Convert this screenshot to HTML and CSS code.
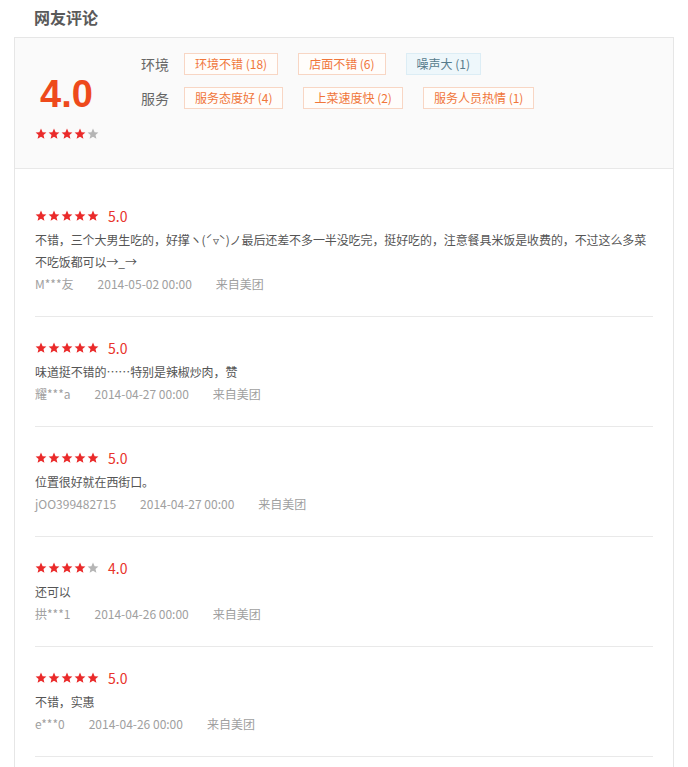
FILE: index.html
```html
<!DOCTYPE html>
<html lang="zh-CN">
<head>
<meta charset="utf-8">
<title>网友评论</title>
<link rel="stylesheet" href="styles.css">
</head>
<body>
<svg class="defs" width="0" height="0" aria-hidden="true">
  <defs>
    <symbol id="star" viewBox="0 0 24 24">
      <path d="M12 1.2l3.2 7.1 7.6.7-5.8 5.1 1.8 7.6L12 17.7l-6.8 4 1.8-7.6L1.2 9l7.6-.7z"/>
    </symbol>
  </defs>
</svg>
<div class="page">
  <h2 class="title">网友评论</h2>
  <div class="box">
    <div class="summary">
      <div class="score">
        <div class="score-num">4.0</div>
        <div class="stars">
          <svg class="star on"><use href="#star"/></svg><svg class="star on"><use href="#star"/></svg><svg class="star on"><use href="#star"/></svg><svg class="star on"><use href="#star"/></svg><svg class="star off"><use href="#star"/></svg>
        </div>
      </div>
      <div class="tags">
        <div class="tag-row">
          <span class="tag-label">环境</span>
          <span class="tag">环境不错 (18)</span>
          <span class="tag">店面不错 (6)</span>
          <span class="tag neg">噪声大 (1)</span>
        </div>
        <div class="tag-row">
          <span class="tag-label">服务</span>
          <span class="tag">服务态度好 (4)</span>
          <span class="tag">上菜速度快 (2)</span>
          <span class="tag">服务人员热情 (1)</span>
        </div>
      </div>
    </div>
    <ul class="list">
      <li class="item">
        <div class="rate">
          <span class="stars"><svg class="star on"><use href="#star"/></svg><svg class="star on"><use href="#star"/></svg><svg class="star on"><use href="#star"/></svg><svg class="star on"><use href="#star"/></svg><svg class="star on"><use href="#star"/></svg></span>
          <span class="rate-num">5.0</span>
        </div>
        <p class="text">不错，三个大男生吃的，好撑ヽ(ˊ▿ˋ)ノ最后还差不多一半没吃完，挺好吃的，注意餐具米饭是收费的，不过这么多菜不吃饭都可以→_→</p>
        <div class="meta"><span>M***友</span><span>2014-05-02 00:00</span><span>来自美团</span></div>
      </li>
      <li class="item">
        <div class="rate">
          <span class="stars"><svg class="star on"><use href="#star"/></svg><svg class="star on"><use href="#star"/></svg><svg class="star on"><use href="#star"/></svg><svg class="star on"><use href="#star"/></svg><svg class="star on"><use href="#star"/></svg></span>
          <span class="rate-num">5.0</span>
        </div>
        <p class="text">味道挺不错的……特别是辣椒炒肉，赞</p>
        <div class="meta"><span>耀***a</span><span>2014-04-27 00:00</span><span>来自美团</span></div>
      </li>
      <li class="item">
        <div class="rate">
          <span class="stars"><svg class="star on"><use href="#star"/></svg><svg class="star on"><use href="#star"/></svg><svg class="star on"><use href="#star"/></svg><svg class="star on"><use href="#star"/></svg><svg class="star on"><use href="#star"/></svg></span>
          <span class="rate-num">5.0</span>
        </div>
        <p class="text">位置很好就在西街口。</p>
        <div class="meta"><span>jOO399482715</span><span>2014-04-27 00:00</span><span>来自美团</span></div>
      </li>
      <li class="item">
        <div class="rate">
          <span class="stars"><svg class="star on"><use href="#star"/></svg><svg class="star on"><use href="#star"/></svg><svg class="star on"><use href="#star"/></svg><svg class="star on"><use href="#star"/></svg><svg class="star off"><use href="#star"/></svg></span>
          <span class="rate-num">4.0</span>
        </div>
        <p class="text">还可以</p>
        <div class="meta"><span>拱***1</span><span>2014-04-26 00:00</span><span>来自美团</span></div>
      </li>
      <li class="item">
        <div class="rate">
          <span class="stars"><svg class="star on"><use href="#star"/></svg><svg class="star on"><use href="#star"/></svg><svg class="star on"><use href="#star"/></svg><svg class="star on"><use href="#star"/></svg><svg class="star on"><use href="#star"/></svg></span>
          <span class="rate-num">5.0</span>
        </div>
        <p class="text">不错，实惠</p>
        <div class="meta"><span>e***0</span><span>2014-04-26 00:00</span><span>来自美团</span></div>
      </li>
    </ul>
  </div>
</div>
</body>
</html>
```

FILE: styles.css
```css
html, body {
  margin: 0;
  padding: 0;
  background: #fff;
}
body {
  font-family: "Noto Sans CJK SC", "Noto Sans", sans-serif;
  font-size: 12px;
  color: #555;
  overflow: hidden;
}
.defs {
  position: absolute;
  width: 0;
  height: 0;
}
.page {
  padding-left: 14px;
  width: 660px;
}
.title {
  margin: 0;
  height: 37px;
  line-height: 34px;
  padding-left: 20px;
  font-size: 16px;
  font-weight: bold;
  color: #5a5a5a;
}
.box {
  border: 1px solid #e6e6e6;
  border-bottom: none;
  min-height: 760px;
}
.summary {
  display: flex;
  height: 130px;
  background: #fafafa;
  border-bottom: 1px solid #e8e8e8;
}
.score {
  width: 126px;
  padding-left: 20px;
  padding-top: 35px;
  box-sizing: border-box;
  flex: none;
}
.score-num {
  font-family: "Liberation Sans", Arial, sans-serif;
  font-weight: bold;
  font-size: 38px;
  line-height: 42px;
  color: #ee4a1c;
  padding-left: 5px;
}
.score .stars {
  margin-top: 13px;
}
.stars {
  display: flex;
  gap: 1px;
  height: 12px;
}
.star {
  width: 12px;
  height: 12px;
  display: block;
}
.star.on { fill: #ea2a2a; }
.star.off { fill: #b5b5b5; }
.tags {
  padding-top: 15px;
  display: flex;
  flex-direction: column;
  gap: 12px;
}
.tag-row {
  display: flex;
  align-items: center;
  gap: 20px;
  height: 22px;
}
.tag-label {
  font-size: 14px;
  color: #666;
  width: 28px;
  margin-right: -5px;
  line-height: 22px;
}
.tag {
  height: 22px;
  box-sizing: border-box;
  line-height: 20px;
  padding: 0 10px;
  border: 1px solid #f8d6c4;
  background: #fffdfb;
  color: #f0763a;
  font-size: 12px;
  white-space: nowrap;
}
.tag.neg {
  border-color: #dcedf5;
  background: #eef7fb;
  color: #567b8c;
}
.list {
  list-style: none;
  margin: 0;
  padding: 16px 20px 0;
}
.item {
  padding: 20px 0 21px;
  border-bottom: 1px solid #e9e9e9;
}
.rate {
  display: flex;
  align-items: center;
  height: 22px;
}
.rate-num {
  margin-left: 9px;
  font-size: 14px;
  color: #e8332b;
  line-height: 22px;
}
.text {
  margin: 2px 0 0;
  line-height: 22px;
  font-size: 12px;
  color: #555;
  letter-spacing: -0.1px;
}
.meta {
  display: flex;
  gap: 24px;
  line-height: 22px;
  font-size: 12px;
  color: #a0a0a0;
}
```
